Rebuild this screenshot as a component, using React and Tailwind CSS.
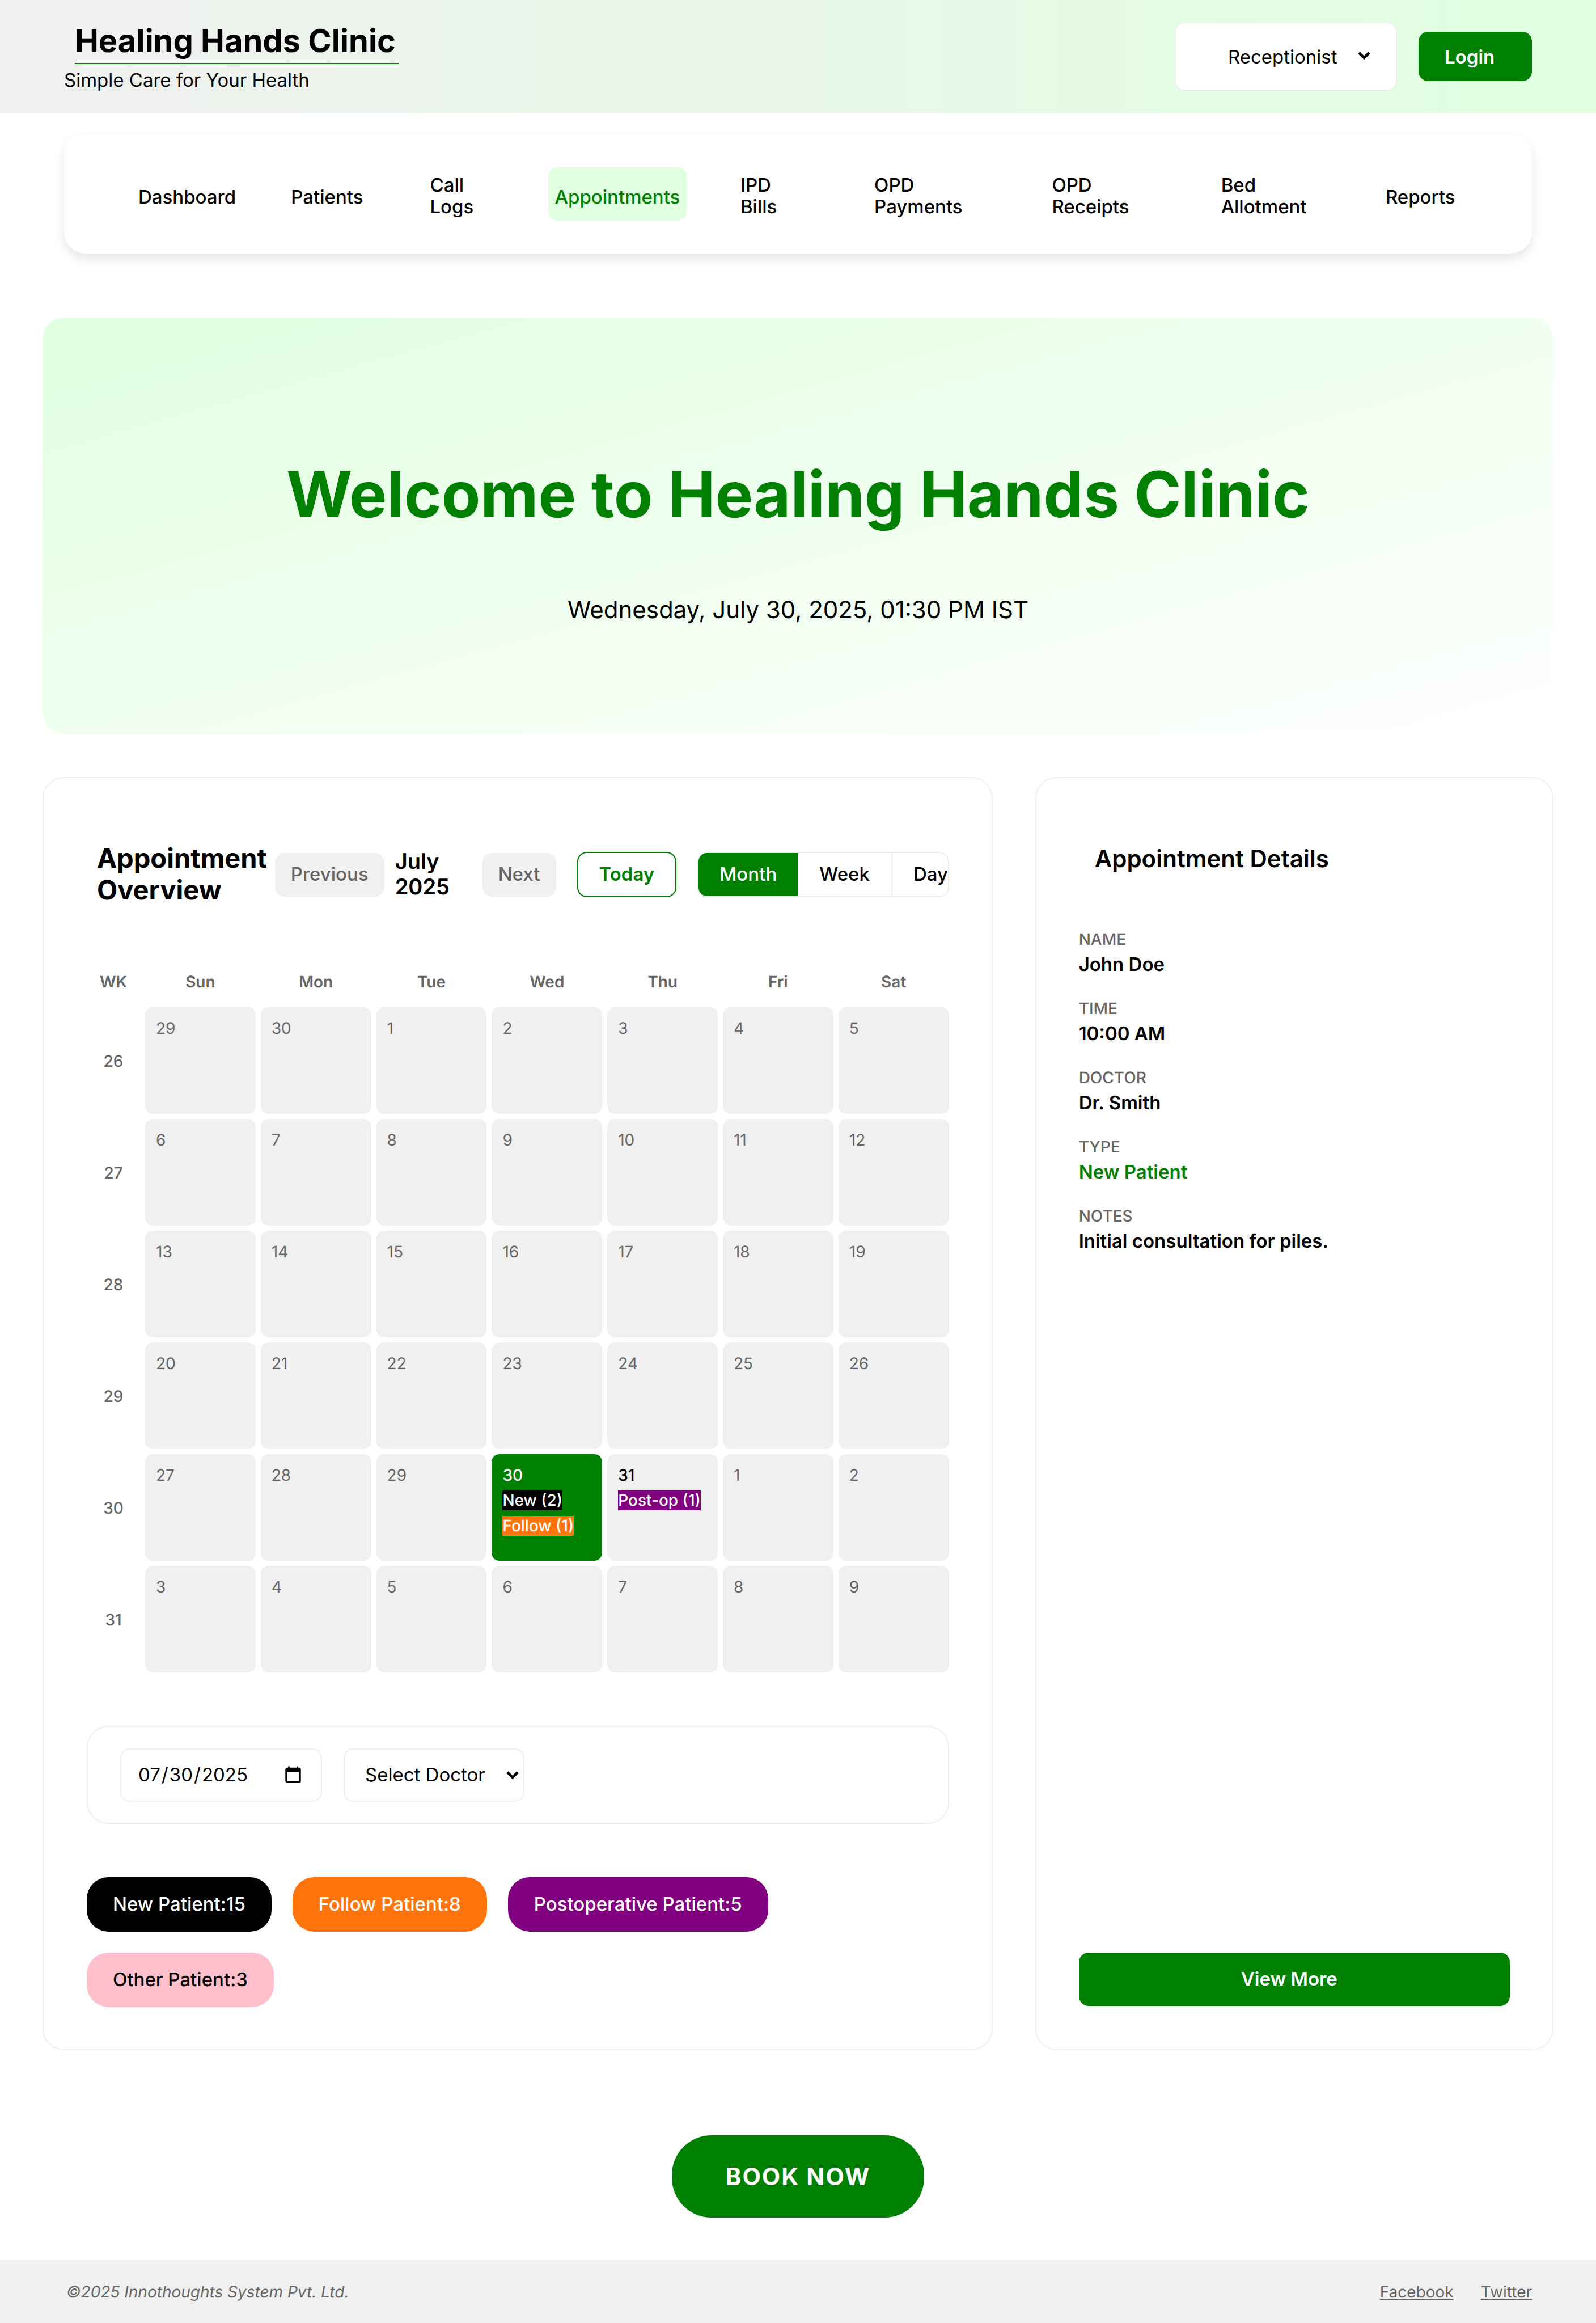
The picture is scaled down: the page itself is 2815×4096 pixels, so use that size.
import { useState } from "react";

const NAV = [
  ["Dashboard"],
  ["Patients"],
  ["Call", "Logs"],
  ["Appointments"],
  ["IPD", "Bills"],
  ["OPD", "Payments"],
  ["OPD", "Receipts"],
  ["Bed", "Allotment"],
  ["Reports"],
];

const DAYS = ["Sun", "Mon", "Tue", "Wed", "Thu", "Fri", "Sat"];

const WEEKS = [
  [26, [29, 30, 1, 2, 3, 4, 5]],
  [27, [6, 7, 8, 9, 10, 11, 12]],
  [28, [13, 14, 15, 16, 17, 18, 19]],
  [29, [20, 21, 22, 23, 24, 25, 26]],
  [30, [27, 28, 29, 30, 31, 1, 2]],
  [31, [3, 4, 5, 6, 7, 8, 9]],
];

const EVENTS = {
  "30-3": [
    ["New (2)", "bg-black"],
    ["Follow (1)", "bg-[#ff740b]"],
  ],
  "30-4": [["Post-op (1)", "bg-[#800080]"]],
};

const CHIPS = [
  ["New Patient:15", "bg-black text-white"],
  ["Follow Patient:8", "bg-[#ff740b] text-white"],
  ["Postoperative Patient:5", "bg-[#800080] text-white"],
  ["Other Patient:3", "bg-[#ffc0cb] text-black"],
];

const DETAILS = [
  ["NAME", "John Doe"],
  ["TIME", "10:00 AM"],
  ["DOCTOR", "Dr. Smith"],
  ["TYPE", "New Patient"],
  ["NOTES", "Initial consultation for piles."],
];

function Chevron({ className }) {
  return (
    <svg viewBox="0 0 22 15" className={"pointer-events-none absolute h-[15px] w-[22px] " + className} aria-hidden="true">
      <path d="M2 2 L11 11 L20 2" fill="none" stroke="black" strokeWidth="4.6" />
    </svg>
  );
}

function CalendarIcon({ className }) {
  return (
    <svg viewBox="0 0 28 30" className={"pointer-events-none absolute h-[30px] w-[28px] " + className} aria-hidden="true">
      <rect x="1.7" y="4.2" width="24.6" height="24" rx="2" fill="none" stroke="black" strokeWidth="2.8" />
      <path d="M1 4 H27 V10 H1 Z" fill="black" />
      <path d="M6.5 0.5 V5 M21.5 0.5 V5" stroke="black" strokeWidth="2.8" />
    </svg>
  );
}

function Header() {
  return (
    <header className="flex min-h-[199px] items-center justify-between bg-linear-to-r from-[#f0f0f0] to-[#e0ffe0] px-[113px]">
      <div>
        <h1 className="ml-[19px] border-b-2 border-[#008000] pr-[6px] pb-[5px] text-[56px] leading-[68px] font-bold">
          Healing Hands Clinic
        </h1>
        <p className="mt-2 text-[33px] leading-[40px]">Simple Care for Your Health</p>
      </div>
      <div className="flex items-center gap-[38px]">
        <div className="relative">
          <select
            aria-label="Role"
            className="h-[121px] w-[392px] appearance-none rounded-[17px] border-2 border-[#f0f0f0] bg-white pt-[2px] pl-[92px] text-[33px]"
          >
            <option>Receptionist</option>
          </select>
          <Chevron className="top-[52px] right-[47px]" />
        </div>
        <button className="h-[87px] w-[200px] rounded-[17px] bg-[#008000] pt-[2px] pl-[46px] text-left text-[33px] font-semibold text-white">
          Login
        </button>
      </div>
    </header>
  );
}

function Nav() {
  return (
    <nav className="mx-[113px] mt-[37px] grid h-[211px] grid-cols-[269fr_245fr_208fr_339fr_236fr_313fr_298fr_290fr_127fr] items-center rounded-[38px] bg-white px-[131px] shadow-[0_9px_19px_rgba(0,0,0,0.1)]">
      {NAV.map((lines) => {
        const active = lines[0] === "Appointments";
        return (
          <a
            key={lines.join(" ")}
            href="#"
            className={
              "flex h-[94px] flex-col justify-center justify-self-start rounded-[17px] text-[33px] leading-[38px] font-medium " +
              (lines.length > 1 ? "pt-[6px] " : "pt-[10px] ") +
              (active ? "bg-[#e0ffe0] px-3 text-[#008000]" : "")
            }
          >
            {lines.map((l) => (
              <span key={l}>{l}</span>
            ))}
          </a>
        );
      })}
    </nav>
  );
}

function Hero() {
  return (
    <section className="mx-[75px] mt-[113px] rounded-[38px] bg-linear-to-br from-[#e0ffe0] to-white pt-[245px] pb-[193px] text-center">
      <h2 className="text-[112px] leading-[135px] font-bold text-[#008000]">Welcome to Healing Hands Clinic</h2>
      <p className="mt-[111px] text-[42px] leading-[50px]">Wednesday, July 30, 2025, 01:30 PM IST</p>
    </section>
  );
}

function CalendarToolbar() {
  return (
    <div className="flex items-center pt-[38px] pl-[18px] text-[33px] font-medium">
      <h2 className="mr-[14px] w-min text-[47px] leading-[56px] font-bold">Appointment Overview</h2>
      <button className="h-[77px] rounded-[17px] bg-[#f0f0f0] px-7 text-[#666]">Previous</button>
      <p className="ml-[19px] w-[154px] shrink-0 pr-10 text-[38px] leading-[45px] font-semibold">July 2025</p>
      <button className="h-[77px] rounded-[17px] bg-[#f0f0f0] px-7 text-[#666]">Next</button>
      <button className="ml-[37px] h-[80px] rounded-[17px] border-2 border-[#008000] bg-white px-[37px] font-semibold text-[#008000]">
        Today
      </button>
      <div className="ml-[37px] flex h-[80px] min-w-0 flex-1 overflow-hidden rounded-[17px] border-2 border-[#f0f0f0]">
        <button className="shrink-0 bg-[#008000] px-[37px] text-white">Month</button>
        <button className="shrink-0 border-r-2 border-[#f0f0f0] px-[38px]">Week</button>
        <button className="shrink-0 pl-[37px]">Day</button>
      </div>
    </div>
  );
}

function Calendar() {
  return (
    <div className="-mx-[9px] mt-[88px] -mb-[9px]">
      <table className="w-full table-fixed border-separate border-spacing-[9px] text-[28px] leading-[34px] text-[#666]">
        <thead>
          <tr>
            <th className="w-[94px] py-[19px] font-semibold">WK</th>
            {DAYS.map((d) => (
              <th key={d} className="py-[19px] font-semibold">{d}</th>
            ))}
          </tr>
        </thead>
        <tbody>
          {WEEKS.map(([wk, days]) => (
            <tr key={wk}>
              <th className="h-[188px] pt-[2px] font-medium">{wk}</th>
              {days.map((d, i) => {
                const events = EVENTS[wk + "-" + i];
                const today = wk === 30 && i === 3;
                return (
                  <td
                    key={i}
                    className={
                      "rounded-[14px] px-[19px] pt-5 align-top " +
                      (today ? "bg-[#008000] font-medium text-white" : events ? "bg-[#f0f0f0] font-medium text-black" : "bg-[#f0f0f0]")
                    }
                  >
                    <div className="flex flex-col items-start gap-[10px]">
                      <span>{d}</span>
                      {events &&
                        events.map(([label, cls]) => (
                          <span key={label} className={"leading-[35px] whitespace-nowrap text-white " + cls}>
                            {label}
                          </span>
                        ))}
                    </div>
                  </td>
                );
              })}
            </tr>
          ))}
        </tbody>
      </table>
    </div>
  );
}

function Filters() {
  const [date, setDate] = useState("2025-07-30");
  return (
    <div className="mt-[94px] flex h-[173px] items-center gap-[38px] rounded-[38px] border-2 border-[#f0f0f0] px-[57px] text-[33px]">
      <div className="relative">
        <input
          type="date"
          aria-label="Date"
          value={date}
          onChange={(e) => setDate(e.target.value)}
          className="h-[94px] w-[356px] rounded-[17px] border-2 border-[#f0f0f0] pl-[29px] [&::-webkit-calendar-picker-indicator]:opacity-0 [&::-webkit-datetime-edit-text]:px-px"
        />
        <CalendarIcon className="top-[31px] right-[37px]" />
      </div>
      <div className="relative">
        <select
          aria-label="Doctor"
          className="h-[94px] w-[319px] appearance-none rounded-[17px] border-2 border-[#f0f0f0] bg-white pl-[36px]"
        >
          <option>Select Doctor</option>
        </select>
        <Chevron className="top-[40px] right-[10px]" />
      </div>
    </div>
  );
}

function Overview() {
  return (
    <section className="min-w-0 rounded-[38px] border-2 border-[#f0f0f0] pt-[76px] pr-[75px] pb-[74px] pl-[76px]">
      <CalendarToolbar />
      <Calendar />
      <Filters />
      <ul className="mt-[94px] flex flex-wrap gap-x-[37px] gap-y-[37px]">
        {CHIPS.map(([label, cls]) => (
          <li key={label} className={"flex h-[96px] items-center rounded-[38px] px-[46px] text-[33px] font-medium " + cls}>
            {label}
          </li>
        ))}
      </ul>
    </section>
  );
}

function Details() {
  return (
    <section className="flex min-w-0 flex-col rounded-[38px] border-2 border-[#f0f0f0] px-[75px] pt-[76px] pb-[76px]">
      <h2 className="pt-[42px] pl-7 text-[42px] leading-[50px] font-semibold">Appointment Details</h2>
      <dl className="mt-[99px] flex flex-col gap-[41px]">
        {DETAILS.map(([k, v]) => (
          <div key={k}>
            <dt className="text-[28px] leading-[34px] font-medium text-[#666]">{k}</dt>
            <dd className={"mt-[7px] text-[33px] leading-[40px] font-semibold " + (k === "TYPE" ? "text-[#008000]" : "")}>{v}</dd>
          </div>
        ))}
      </dl>
      <button className="mt-auto h-[94px] rounded-[17px] bg-[#008000] pr-[18px] text-[33px] font-semibold text-white">
        View More
      </button>
    </section>
  );
}

export default function App() {
  return (
    <div className="bg-white font-[Inter,sans-serif] text-black [text-rendering:geometricPrecision]">
      <Header />
      <Nav />
      <main>
        <Hero />
        <div className="mx-[75px] mt-[76px] grid grid-cols-[1675fr_914fr] gap-[75px]">
          <Overview />
          <Details />
        </div>
        <div className="mt-[150px] flex justify-center">
          <button className="h-[145px] rounded-[70px] bg-[#008000] px-[95px] text-[42px] font-bold tracking-[2px] text-white">
            BOOK NOW
          </button>
        </div>
      </main>
      <footer className="mt-[75px] flex h-[111px] items-center justify-between bg-[#f0f0f0] pr-[113px] pl-[117px] text-[28px] text-[#666]">
        <p className="italic">©2025 Innothoughts System Pvt. Ltd.</p>
        <div className="flex gap-12">
          <a href="#" className="underline">Facebook</a>
          <a href="#" className="underline">Twitter</a>
        </div>
      </footer>
    </div>
  );
}
